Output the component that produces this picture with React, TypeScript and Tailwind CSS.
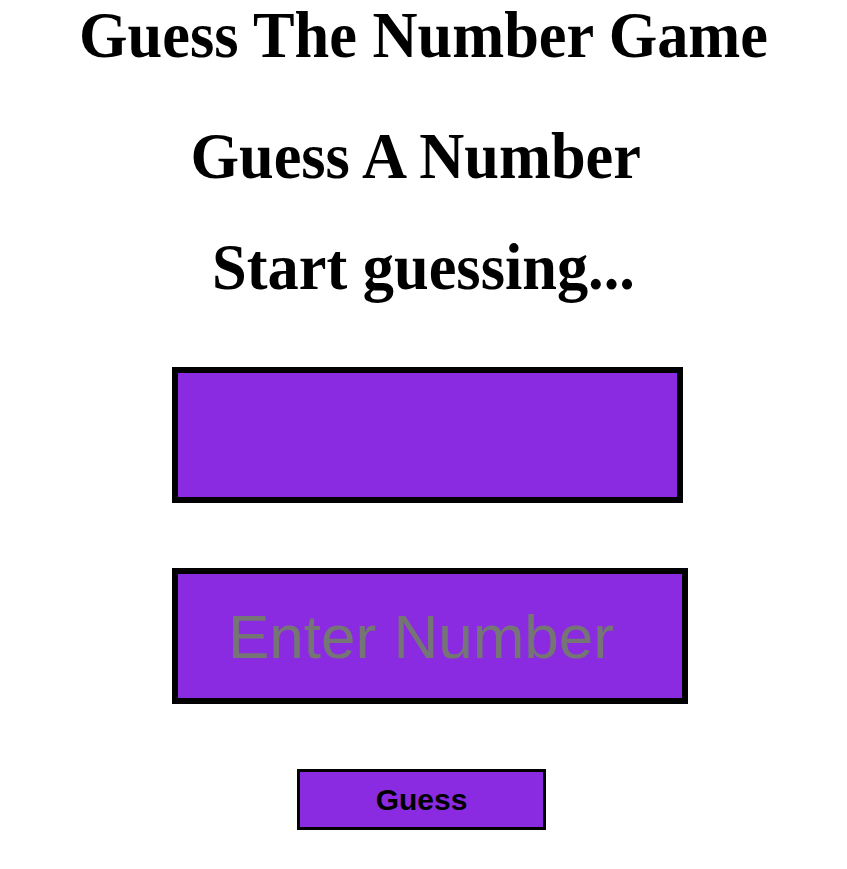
export default function App() {
  const heading =
    "text-center text-[66px] font-bold text-black leading-[65px] font-['Liberation_Serif','Times_New_Roman',serif] scale-x-[0.945]";
  return (
    <div className="w-[847px] h-[869px] bg-white overflow-hidden">
      <div className="flex flex-col pt-[2px]">
        <h1 className={heading}>Guess The Number Game</h1>
        <h2 className={"mt-[56px] " + heading}>{"Guess A Number\u00a0"}</h2>
        <h3 className={"mt-[46px] " + heading}>Start guessing...</h3>
        <div className="mt-[68px] ml-[172px] w-[511px] h-[136px] border-[6px] border-black bg-[#8a2be2]" />
        <div className="mt-[65px] ml-[172px] w-[516px] h-[136px] border-[6px] border-black bg-[#8a2be2] flex items-center">
          <input
            type="number"
            placeholder="Enter Number"
            className="w-full h-full bg-transparent pl-[50px] outline-none text-[62px] text-black placeholder:text-[#757575] font-['Liberation_Sans',Arial,sans-serif]"
          />
        </div>
        <div className="mt-[65px] flex">
          <button className="ml-[297px] w-[249px] h-[61px] border-[3px] border-black bg-[#8a2be2] text-[30px] font-bold text-black font-['Liberation_Sans',Arial,sans-serif]">
            Guess
          </button>
        </div>
      </div>
    </div>
  );
}
